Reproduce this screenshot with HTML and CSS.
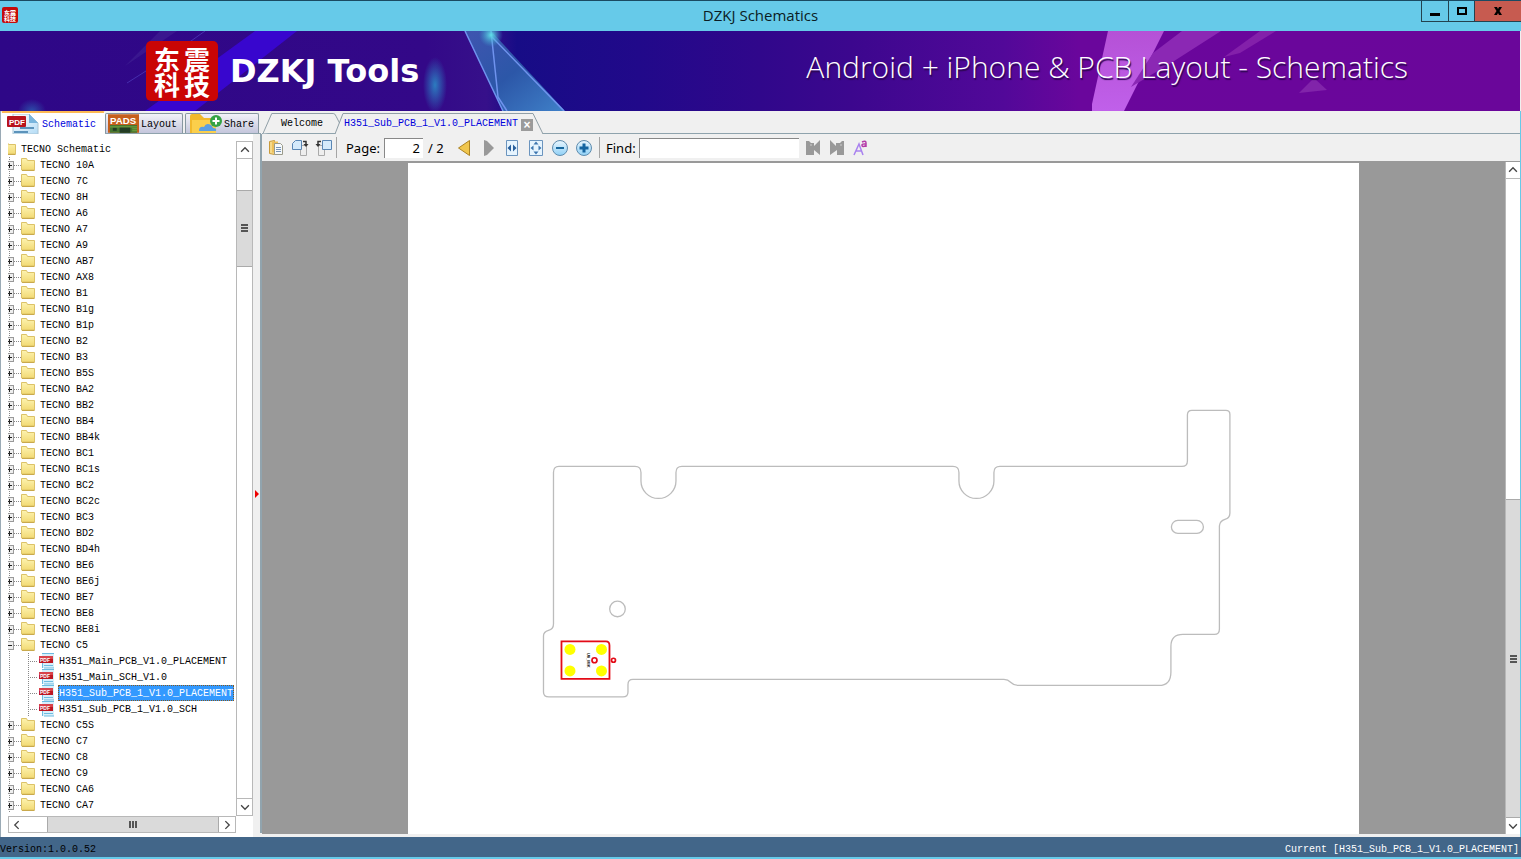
FILE: index.html
```html
<!DOCTYPE html>
<html lang="en">
<head>
<meta charset="utf-8">
<title>DZKJ Schematics</title>
<link rel="stylesheet" href="styles.css">
</head>
<body>
<svg class="defs" aria-hidden="true">
  <defs>
    <linearGradient id="gold" x1="0" y1="0" x2="0" y2="1"><stop offset="0" stop-color="#fdf3b0"/><stop offset="1" stop-color="#f2da74"/></linearGradient>
    <linearGradient id="sheet" x1="0" y1="0" x2="1" y2="1"><stop offset="0" stop-color="#fff"/><stop offset="1" stop-color="#b4dcf6"/></linearGradient>
    <linearGradient id="orb" x1="0" y1="0" x2="0" y2="1"><stop offset="0" stop-color="#e9f6fe"/><stop offset="1" stop-color="#8fd0f6"/></linearGradient>
    <symbol id="folder" viewBox="0 0 14 14">
      <path d="M.5.5h5l1 2h7v9.500h-13z" fill="url(#gold)" stroke="#dcc268"/><path d="M1 12.500h12.500" stroke="#c9a94c"/>
    </symbol>
    <symbol id="pdf" viewBox="0 0 16 16">
      <path d="M4 0h12v15H4z" fill="#d8effa"/><path d="M4 .5h12M4.500 10v5M6 12.500h9M6 15h10" stroke="#6cbbe0"/>
      <path d="M1 3h14v7H1z" fill="#bd1622"/><path d="M1 3h14v3H1z" fill="#d8424a"/>
      <text x="2" y="9" class="pdf-mini">PDF</text>
    </symbol>
  </defs>
</svg>

<header class="titlebar">
  <svg class="app-icon" viewBox="0 0 16 16" aria-hidden="true"><rect width="16" height="16" rx="2" fill="#c40a0a"/><text x="2" y="8" class="seal-mini">东震</text><text x="2" y="14" class="seal-mini">科技</text></svg>
  <h1>DZKJ Schematics</h1>
  <div class="window-buttons">
    <button class="wb min" aria-label="Minimize"><svg viewBox="0 0 12 12"><path d="M1 8h10v3H1z"/></svg></button>
    <button class="wb max" aria-label="Maximize"><svg viewBox="0 0 12 12"><path d="M2 3h8v6H2z" fill="none" stroke="#000" stroke-width="2"/></svg></button>
    <button class="wb close" aria-label="Close"><svg viewBox="0 0 12 12"><path d="M2 2h3l1 2 1-2h3L7.500 6 10 10H7L6 8l-1 2H2l2.500-4z"/></svg></button>
  </div>
</header>

<section class="banner">
  <svg class="banner-art" viewBox="0 0 1520 80" preserveAspectRatio="none" aria-hidden="true">
    <defs>
      <linearGradient id="beam" x1="0" y1="0" x2="1" y2="1"><stop offset="0" stop-color="#3f55b0"/><stop offset=".5" stop-color="#2c57a8"/><stop offset="1" stop-color="#3f80c8"/></linearGradient>
      <linearGradient id="pink" x1="0" y1="0" x2="0" y2="1"><stop offset="0" stop-color="#b551d6"/><stop offset="1" stop-color="#c060ea"/></linearGradient>
      <radialGradient id="glow"><stop offset="0" stop-color="#2c7cc0"/><stop offset="1" stop-color="#2c7cc0" stop-opacity="0"/></radialGradient>
      <radialGradient id="star"><stop offset="0" stop-color="#5fe0e8"/><stop offset="1" stop-color="#3fa0d0" stop-opacity="0"/></radialGradient>
    </defs>
    <path d="M255 0h42L195 80h-50z" fill="#3a06da" opacity=".85"/>
    <path d="M160 0h17L125 35z" fill="#412195" opacity=".6"/><path d="M205 0l-28 20M165 28l-38 24" stroke="#5548c8" opacity=".6"/>
    <ellipse cx="32" cy="80" rx="14" ry="12" fill="url(#glow)" opacity=".6"/>
    <ellipse cx="435" cy="54" rx="12" ry="28" fill="url(#glow)"/>
    <path d="M465 0h26l74 80H503z" fill="url(#beam)"/>
    <path d="M465 0l38 80M491 0l7 66M491 5l73 75M498 66l9 14" fill="none" stroke="#6f93ee" stroke-width="1.500"/>
    <ellipse cx="491" cy="4" rx="12" ry="12" fill="url(#star)"/>
    <path d="M1108 0h56l-40 80h-32v-7z" fill="url(#pink)"/>
    <path d="M1182 0h39l-50 32-40 24 22-34z" fill="#8b28b4"/><path d="M1260 0h16l-36 22-16 4z" fill="#8320aa"/>
    <path d="M1314 47l13 12-28 3z" fill="#8124aa"/>
  </svg>
  <div class="seal"><span>东</span><span>震</span><span>科</span><span>技</span></div>
  <strong class="brand">DZKJ Tools</strong>
  <p class="slogan">Android + iPhone &amp; PCB Layout - Schematics</p>
</section>

<main class="workspace">
  <aside class="side">
    <nav class="side-tabs">
      <button class="stab active"><svg class="i-pdf" viewBox="0 0 32 20" aria-hidden="true"><path d="M6 0h16l9 9v11H6z" fill="url(#sheet)" stroke="#a8c4d4"/><path d="M22 0v9h9z" fill="#79b5dd"/><path d="M7 18h14M13 14h14" stroke="#5c93bb" stroke-width="2"/><rect y="2" width="19" height="11" rx="1" fill="#b8121c"/><text x="2" y="11" class="pdf-big">PDF</text></svg><span>Schematic</span></button>
      <button class="stab layout"><svg class="i-pads" viewBox="0 0 32 19" aria-hidden="true"><path d="M0 0h32v19H0z" fill="#c65f1c"/><path d="M2 11h28v8H2z" fill="#45752f"/><path d="M5 14h4v3H5zM12 13h11v6H12z" fill="#223c24"/><path d="M2 13h28M25 15h5M25 17h5" stroke="#79a843"/><text x="2" y="10" class="pads">PADS</text></svg><span>Layout</span></button>
      <button class="stab share"><svg class="i-share" viewBox="0 0 34 19" aria-hidden="true"><path d="M0 2q0-2 2-2h8l4 4h11v15H0z" fill="#f1b92c"/><path d="M2 6h24v13H2z" fill="#fbcf4b"/><path d="M9 17q0-5 5-4 2-5 7-2 2 2 2 3 4 0 3 3z" fill="#5b9fe2"/><circle cx="26" cy="7" r="6" fill="#35a345"/><path d="M26 3.500v7M22.500 7h7" stroke="#fff" stroke-width="2"/></svg><span>Share</span></button>
    </nav>
    <div class="tree-pane">
      <div class="tree-box">
        <div class="tree" id="tree"></div>
        <div class="hbar"><button aria-label="Scroll left"><svg viewBox="0 0 9 9"><path d="M6 1L2.500 4.500 6 8"/></svg></button><i class="hthumb"><b></b></i><button aria-label="Scroll right"><svg viewBox="0 0 9 9"><path d="M3 1l3.500 3.500L3 8"/></svg></button></div>
      </div>
      <div class="vbar"><button aria-label="Scroll up"><svg viewBox="0 0 9 9"><path d="M1 6l3.500-3.500L8 6"/></svg></button><i class="vgap"></i><i class="vthumb"><b></b></i><i class="vrest"></i><button aria-label="Scroll down"><svg viewBox="0 0 9 9"><path d="M1 3l3.500 3.500L8 3"/></svg></button></div>
    </div>
  </aside>
  <div class="splitter"><i></i></div>

  <section class="doc">
    <nav class="doc-tabs">
      <button class="dtab"><svg viewBox="0 0 80 22" preserveAspectRatio="none" aria-hidden="true"><path d="M0 21.500L9 .5h63q2 0 3 3l5 10"/></svg><span>Welcome</span></button>
      <div class="dtab current"><svg viewBox="0 0 208 22" preserveAspectRatio="none" aria-hidden="true"><path d="M0 22L8 .5h190L208 22"/></svg><span>H351_Sub_PCB_1_V1.0_PLACEMENT</span><button class="tab-close" aria-label="Close tab">×</button></div>
    </nav>
    <div class="toolbar">
      <button aria-label="Copy"><svg viewBox="0 0 18 18"><path d="M2.500 2.500l5-1v14l-5-1z" fill="#f5d98a" stroke="#c99a3a"/><path d="M5 2.500h6v11H5z" fill="#edc05c"/><path d="M7.500 4.500h6l2 2v9h-8z" fill="#f6f9fb" stroke="#9a9a8a"/><path d="M9 8.500h5M9 10.500h5M9 12.500h5" stroke="#7794b8"/></svg></button>
      <button aria-label="Rotate right"><svg viewBox="0 0 18 18"><path d="M9.500 6.500h6v10h-6z" fill="#eee" stroke="#aaa"/><path d="M1.500 4.500l3-3h6v9h-9z" fill="#d5eafb" stroke="#5a86b4"/><path d="M12 2.500h3v3" fill="none" stroke="#333" stroke-width="1.500"/><path d="M12.500 5h5L15 8z" fill="#333"/></svg></button>
      <button aria-label="Rotate left"><svg viewBox="0 0 18 18"><path d="M3.500 6.500h6v10h-6z" fill="#eee" stroke="#aaa"/><path d="M7.500 1.500h9v9h-9z" fill="#d5eafb" stroke="#5a86b4"/><path d="M6 2.500H3v3" fill="none" stroke="#333" stroke-width="1.500"/><path d="M.5 5h5L3 8z" fill="#333"/></svg></button>
      <i class="sep first"></i>
      <label class="page-label" for="page">Page:</label><input id="page" class="page-no" value="2"><span class="of">/ 2</span>
      <button aria-label="Previous page"><svg viewBox="0 0 18 18"><path d="M14.500 1.500v15L3.500 9z" fill="#f0c64e" stroke="#ac8322"/></svg></button>
      <button class="next" aria-label="Next page"><svg viewBox="0 0 18 18"><path d="M5 1v16l3-1 7-7-7-7z" fill="#999"/></svg></button>
      <button aria-label="Fit width"><svg viewBox="0 0 18 18"><path d="M3.500 1.500h11v15h-11z" fill="#e6f4fe" stroke="#6b94be"/><path d="M8 5.500v7L4.500 9zM10 5.500v7L13.500 9z" fill="#285f9c"/></svg></button>
      <button aria-label="Fit page"><svg viewBox="0 0 18 18"><path d="M2.500 1.500h13v15h-13z" fill="#e6f4fe" stroke="#6b94be"/><path d="M9 2.500l2.500 3h-5zM9 15.500l2.500-3h-5zM3.500 9l3-2.500v5zM14.500 9l-3-2.500v5z" fill="#3d76af"/></svg></button>
      <button aria-label="Zoom out"><svg viewBox="0 0 18 18"><circle cx="9" cy="9" r="7.500" fill="url(#orb)" stroke="#5f8cae"/><path d="M5 9h8" stroke="#17679e" stroke-width="2"/></svg></button>
      <button aria-label="Zoom in"><svg viewBox="0 0 18 18"><circle cx="9" cy="9" r="7.500" fill="url(#orb)" stroke="#5f8cae"/><path d="M4.500 9h9M9 4.500v9" stroke="#1464a0" stroke-width="3"/></svg></button>
      <i class="sep"></i>
      <label class="find-label" for="find">Find:</label><input id="find" class="find">
      <button aria-label="Find previous"><svg viewBox="0 0 18 18"><path d="M2 2h3l2 2h3v3l6-6v15l-6-5v5H2z" fill="#999"/><path d="M6 6h2" stroke="#ccc"/></svg></button>
      <button aria-label="Find next"><svg viewBox="0 0 18 18"><path d="M2 1l6 6V4h4l2-2h2v14H9v-5l-7 5z" fill="#999"/><path d="M12 6h2" stroke="#ccc"/></svg></button>
      <button aria-label="Match case"><svg viewBox="0 0 18 18"><path d="M2 16L7 5l4 11M4 12h6" fill="none" stroke="#a982ef" stroke-width="1.500"/><path d="M10 3q4-2 4 1v4M14 5q-4.500-.5-4 1.500t4 0" fill="none" stroke="#b53ca8" stroke-width="1.500"/></svg></button>
    </div>
    <div class="viewer">
      <div class="canvas">
        <svg class="sheet" viewBox="408 163 951 671" preserveAspectRatio="xMidYMin meet" role="img" aria-label="PCB placement drawing">
          <g fill="none" stroke="#bcbcbc" stroke-width="1.300">
            <path d="M559 466.500H635q6 0 6 6V481a17.500 17.500 0 0 0 35 0V472.500q0-6 6-6H953q6 0 6 6V481a17.500 17.500 0 0 0 35 0V472.500q0-6 6-6H1182q5.500 0 5.500-5.500V415q0-4.500 4.500-4.500H1226q4 0 4 4V513q0 5-5 6.500t-5.500 6.500V629q0 5.500-5 5.500H1183q-12 0-12 12V672q0 13.500-12 13.500H1018q-4 0-7-3t-7-3H633q-5 0-5 5V692q0 5-5 5H549q-5.500 0-5.500-5V636q0-4 5-5.500t5-6.500V472.500q0-6 5.500-6z"/>
            <circle cx="617.500" cy="609" r="7.800"/><rect x="1171.500" y="520.500" width="32" height="13" rx="6.500"/>
          </g>
          <path d="M561.500 641.500H606q3.500 0 3.500 4V679H561.500z" fill="none" stroke="#e30b17" stroke-width="1.800"/>
          <g fill="#ff0"><circle cx="570" cy="649.500" r="5.500"/><circle cx="601.500" cy="649.500" r="5.500"/><circle cx="570" cy="671" r="5.500"/><circle cx="601.500" cy="671" r="5.500"/></g>
          <g fill="none" stroke="#e30b17" stroke-width="1.700"><circle cx="594.500" cy="660.300" r="2.500"/><circle cx="613.500" cy="660.300" r="2"/></g>
          <text class="part" transform="translate(587 653) rotate(90)">U8_MIK</text>
        </svg>
      </div>
      <div class="vbar dbar"><button aria-label="Page up"><svg viewBox="0 0 9 9"><path d="M1 6l3.500-3.500L8 6"/></svg></button><i class="dgap"></i><i class="dthumb"><b></b></i><button aria-label="Page down"><svg viewBox="0 0 9 9"><path d="M1 3l3.500 3.500L8 3"/></svg></button></div>
    </div>
  </section>
</main>

<footer class="status"><span>Version:1.0.0.52</span><span class="current-file">Current [H351_Sub_PCB_1_V1.0_PLACEMENT]</span></footer>
<script src="tree.js"></script>
</body>
</html>
```
FILE: styles.css
```css
* { box-sizing: border-box; }
body {
  margin: 0; height: 100vh; display: flex; flex-direction: column; overflow: hidden;
  font: 10px/16px "Liberation Mono", monospace; color: #000; background: #f0f0f0;
}
button { font: inherit; color: inherit; padding: 0; border: 0; background: none; }
i, b { display: block; }
.defs { position: absolute; width: 0; height: 0; }
.pdf-mini { font: bold 5px "Liberation Sans", sans-serif; fill: #fff; }
.pdf-big { font: bold 8px "Liberation Sans", sans-serif; fill: #fff; }
.pads { font: bold 10px "Liberation Sans", sans-serif; fill: #fff; }
.seal-mini { font: bold 6px "Noto Sans CJK SC", sans-serif; fill: #fff; }
.part { font: bold 4px "Liberation Sans", sans-serif; }

.titlebar {
  flex: none; height: 31px; display: grid; grid-template-columns: 1fr auto 1fr; align-items: start;
  background: #66cae9; border-top: 1px solid #1a4a62;
}
.app-icon { width: 16px; height: 16px; margin: 6px 2px; }
.titlebar h1 { margin: 0; font: 400 15px/28px "Open Sans", sans-serif; color: #0b1c24; }
.window-buttons { justify-self: end; display: flex; height: 21px; border: 1px solid #23424f; border-top: 0; border-right: 0; }
.wb { height: 20px; display: flex; align-items: center; justify-content: center; border-right: 1px solid #23424f; }
.wb svg { width: 12px; height: 12px; }
.min { width: 27px; }
.max { width: 26px; }
.close { width: 46px; background: #c75b50; border-right: 0; }

.banner {
  position: relative; flex: none; height: 80px; margin-right: 1px; display: flex; align-items: center; color: #fff;
  background: linear-gradient(90deg, #2e0787 0, #330888 28%, #36108a 32%, #170c86 34%, #21098a 42%, #30078b 50%, #3c078e 56%, #520899 66%, #6a069c 71%, #6a069a 100%);
}
.banner-art { position: absolute; inset: 0; width: 100%; height: 100%; }
.seal, .brand, .slogan { position: relative; }
.seal {
  width: 72px; height: 60px; margin-left: 146px; padding: 5px 6px; border-radius: 5px; background: #ca0505;
  display: grid; grid-template-columns: 1fr 1fr; justify-items: center; font: bold 26px/25px "Noto Sans CJK SC", sans-serif;
}
.brand { margin-left: 12px; font: bold 32px/48px "DejaVu Sans", sans-serif; }
.slogan { margin: 0 112px 8px auto; font: 300 30px/40px "Open Sans", sans-serif; text-shadow: 1px 2px 1px #2c0750; }

.workspace { flex: 1; min-height: 0; display: flex; border-right: 1px solid #66cae9; }
.side { width: 253px; flex: none; display: flex; flex-direction: column; border-left: 1px solid #9aaab5; background: #fff; }
.side-tabs { height: 23px; width: 260px; flex: none; display: flex; align-items: flex-end; background: #f0f0f0; border-bottom: 1px solid #8fa3ad; }
.stab { height: 20px; display: flex; align-items: center; gap: 2px; border: 1px solid #8797a0; border-bottom: 0; background: linear-gradient(#f2f2f8, #c4c6dc); border-radius: 2px 2px 0 0; overflow: hidden; }
.stab span, .dtab span { position: relative; padding-top: 2px; }
.stab.active { height: 23px; width: 104px; margin-bottom: -1px; padding-left: 5px; gap: 3px; color: #00d; background: #fff; border-color: #fff; border-top: 2px solid #fdb953; }
.stab.layout { width: 78px; padding-left: 2px; }
.stab.share { width: 74px; margin-left: 2px; padding-left: 4px; gap: 0; }
.i-pdf { width: 32px; height: 20px; }
.i-pads { width: 31px; height: 19px; }
.i-share { width: 34px; height: 19px; }
.tree-pane { flex: 1; min-height: 0; display: flex; padding: 7px 0 4px 7px; }
.tree-box { flex: 1; min-width: 0; display: flex; flex-direction: column; }
.tree { flex: 1; min-height: 0; overflow: hidden; }
.row { height: 16px; display: flex; align-items: center; white-space: nowrap; }
.row svg { width: 14px; height: 14px; flex: none; margin-right: 5px; }
.row.root svg { margin-left: -6px; }
.name { padding-top: 2px; line-height: 14px; }
.branch { position: relative; width: 13px; height: 16px; flex: none; background: linear-gradient(#888 50%, transparent 0) 1px 0 / 1px 2px repeat-y, linear-gradient(90deg, #888 50%, transparent 0) 2px 8px / 2px 1px repeat-x; }
.branch button { position: absolute; left: 0; top: 4px; width: 6px; height: 9px; border: 1px solid #999; border-left: 0; background: #eee; }
.branch button::before { content: ""; position: absolute; left: 0; top: 3px; width: 4px; height: 1px; background: #222; }
.branch.plus button::after { content: ""; position: absolute; left: 1px; top: 1px; width: 1px; height: 5px; background: #222; }
.row.file { padding-left: 1px; background: linear-gradient(#888 50%, transparent 0) 1px 0 / 1px 2px repeat-y; }
.row.file .line { width: 10px; height: 16px; margin-left: 19px; background: linear-gradient(#888 50%, transparent 0) 0 0 / 1px 2px repeat-y, linear-gradient(90deg, #888 50%, transparent 0) 0 8px / 2px 1px repeat-x; }
.row.file svg { width: 16px; height: 16px; margin-right: 4px; }
.row.file .name { padding: 2px 1px 0; }
.row.selected .name { background: #3399ff; color: #fff; outline: 1px dotted #855a20; outline-offset: -1px; }
.hbar { height: 17px; flex: none; display: flex; border: 1px solid #b8b8b8; }
.hbar button { width: 16px; flex: none; background: #fff; }
.hthumb { flex: 1; margin-left: 22px; display: grid; place-items: center; background: #dadada; border: 1px solid #aaa; border-width: 0 1px; }
.hthumb b { width: 8px; height: 7px; background: repeating-linear-gradient(90deg, #555 0 2px, transparent 2px 3px); }
.vbar { width: 17px; flex: none; display: flex; flex-direction: column; border: 1px solid #b8b8b8; background: #fff; margin-bottom: 17px; }
.vbar button, .hbar button { display: grid; place-items: center; }
.vbar button { height: 16px; flex: none; }
.vbar svg, .hbar svg { width: 10px; height: 10px; fill: none; stroke: #444; stroke-width: 1.2; }
.vgap { flex: 31; border-top: 1px solid #b8b8b8; }
.vthumb { flex: 76; display: grid; place-items: center; background: #dadada; border: 1px solid #aaa; border-width: 1px 0; }
.vthumb b, .dthumb b { width: 7px; height: 8px; background: repeating-linear-gradient(#555 0 2px, transparent 2px 3px); }
.vrest { flex: 536; border-bottom: 1px solid #b8b8b8; }
.splitter { width: 9px; flex: none; margin: 23px 0 4px; display: flex; align-items: center; background: #f0f0f0; border-right: 2px solid #91a4ae; }
.splitter i { margin: 20px 0 0 2px; border: 4px solid transparent; border-left: 4px solid #e00; border-right: 0; }

.doc { flex: 1; min-width: 0; display: flex; flex-direction: column; background: #f0f0f0; }
.doc-tabs { height: 23px; flex: none; display: flex; align-items: flex-end; padding-left: 1px; border-bottom: 1px solid #8fa3ad; }
.dtab { position: relative; height: 20px; display: flex; align-items: center; width: 72px; padding-left: 18px; }
.dtab svg { position: absolute; left: 0; bottom: -1px; width: 78px; height: 21px; fill: #f0f0f0; stroke: #8b9ba3; }
.dtab.current { width: 208px; padding-left: 9px; gap: 3px; color: #00d; }
.dtab.current svg { width: 208px; }
.tab-close { position: relative; width: 12px; height: 12px; margin-top: 3px; background: #9b9b9b; color: #fff; font: bold 12px/12px "Liberation Sans", sans-serif; }
.toolbar { height: 28px; flex: none; display: flex; align-items: center; padding-left: 5px; border-bottom: 1px solid #999; font: 13px/20px "Noto Sans", sans-serif; }
.toolbar button { width: 18px; height: 18px; margin-right: 6px; flex: none; }
.toolbar button svg { display: block; width: 18px; height: 18px; }
.sep { width: 1px; height: 21px; background: #a5a5a5; }
.sep.first { margin-left: -3px; }
.page-label { margin-left: 9px; width: 38px; }
.find-label { margin-left: 6px; width: 33px; }
input { height: 20px; padding: 0; border: 1px solid #888; border-width: 1px 0 0 1px; background: #fff; font: inherit; color: #000; }
.page-no { width: 39px; padding-right: 3px; text-align: right; }
.of { width: 27px; margin-left: 5px; }
.toolbar .find { width: 160px; margin-right: 5px; }
.viewer { flex: 1; min-height: 0; margin-bottom: 3px; display: flex; background: #999; }
.canvas { flex: 1; min-width: 0; display: flex; justify-content: center; overflow: hidden; padding-top: 1px; }
.sheet { width: 76.5%; height: 100%; background: #fff; }
.vbar.dbar { width: 15px; margin: 0; border-width: 0 0 0 1px; }
.dgap { flex: 322; border-top: 1px solid #b8b8b8; }
.dthumb { flex: 318; display: grid; place-items: center; background: #dadada; border: 1px solid #aaa; border-width: 1px 0; }

.status { flex: none; height: 22px; display: flex; align-items: flex-end; justify-content: space-between; padding-right: 2px; background: #426689; border-bottom: 2px solid #66cae9; line-height: 14px; }
.current-file { color: #fff; }
```
FILE: tree.js
```js
const folders = "10A,7C,8H,A6,A7,A9,AB7,AX8,B1,B1g,B1p,B2,B3,B5S,BA2,BB2,BB4,BB4k,BC1,BC1s,BC2,BC2c,BC3,BD2,BD4h,BE6,BE6j,BE7,BE8,BE8i,C5,C5S,C7,C8,C9,CA6,CA7".split(",");
const files = ["H351_Main_PCB_V1.0_PLACEMENT", "H351_Main_SCH_V1.0", "H351_Sub_PCB_1_V1.0_PLACEMENT", "H351_Sub_PCB_1_V1.0_SCH"];
const open = "C5";
const selected = files[2];
const icon = (id) => `<svg aria-hidden="true"><use href="#${id}"/></svg>`;

let html = `<div class="row root">${icon("folder")}<span class="name">TECNO Schematic</span></div>`;
for (const name of folders) {
  const isOpen = name === open;
  html += `<div class="row"><span class="branch ${isOpen ? "minus" : "plus"}"><button aria-label="Toggle TECNO ${name}"></button></span>${icon("folder")}<span class="name">TECNO ${name}</span></div>`;
  if (isOpen) {
    for (const file of files) {
      html += `<div class="row file${file === selected ? " selected" : ""}"><span class="line"></span>${icon("pdf")}<span class="name">${file}</span></div>`;
    }
  }
}
document.getElementById("tree").innerHTML = html;
```
